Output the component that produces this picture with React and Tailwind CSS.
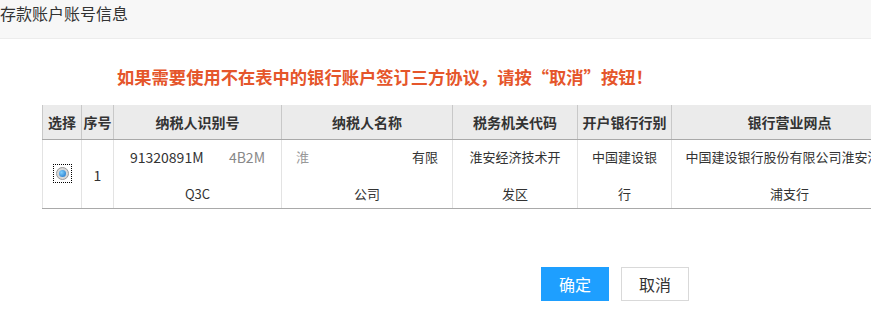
import React from "react";

const cols = "grid grid-cols-[39px_32px_168px_171px_125px_94px_236px]";

const headers = ["选择", "序号", "纳税人识别号", "纳税人名称", "税务机关代码", "开户银行行别", "银行营业网点"];

function Radio() {
  return (
    <span className="inline-flex items-center justify-center w-[19px] h-[19px] border border-dotted border-black">
      <span className="flex items-center justify-center w-[13px] h-[13px] rounded-full bg-[#d8d8d8] border border-[#9a9a9a]">
        <span className="w-[7px] h-[7px] rounded-full bg-[radial-gradient(circle_at_35%_35%,#7fd0ff,#1a6fc4)]" />
      </span>
    </span>
  );
}

function TwoLine({ first, second }) {
  return (
    <div className="flex flex-col h-[68px] pt-[3px] px-3 text-center">
      <div className="leading-[28px] h-[28px] whitespace-nowrap overflow-hidden">{first}</div>
      <div className="leading-[28px] h-[28px] mt-[9px] whitespace-nowrap overflow-hidden">{second}</div>
    </div>
  );
}

export default function App() {
  return (
    <div className="w-[871px] h-[310px] overflow-hidden bg-white text-[#333] font-['Noto_Sans_CJK_SC','Noto_Sans',sans-serif]">
      <div className="h-[39px] bg-[#f7f7f7] border-b border-[#ececec]">
        <div className="text-[16px] leading-[26px]">存款账户账号信息</div>
      </div>

      <div className="pl-[117px] mt-[26px] text-[17.3px] leading-[24px] font-bold text-[#e5562b] whitespace-nowrap">
        如果需要使用不在表中的银行账户签订三方协议，请按“取消”按钮！
      </div>

      <div className="ml-[42px] mt-[16px] w-[900px] text-[13px]">
        <div className={`${cols} h-[35px] bg-[#ebebeb] border-b border-[#a9a9a9]`}>
          {headers.map((h) => (
            <div key={h} className="flex items-center justify-center border-l border-[#c8c8c8] text-[14px] font-bold whitespace-nowrap">
              {h}
            </div>
          ))}
        </div>
        <div className={`${cols} h-[69px] border-b border-[#a9a9a9]`}>
          <div className="flex items-center justify-center border-l border-[#e3e3e3] pb-[2px]">
            <Radio />
          </div>
          <div className="flex items-center justify-center border-l border-[#e3e3e3] text-[14px] pt-[2px]">1</div>
          <div className="border-l border-[#e3e3e3]">
            <TwoLine
              first={
                <span className="inline-flex justify-between w-[135px] text-[14px]">
                  <span>91320891M</span>
                  <span className="text-[#888]">4B2M</span>
                </span>
              }
              second="Q3C"
            />
          </div>
          <div className="border-l border-[#e3e3e3]">
            <TwoLine
              first={
                <span className="inline-flex justify-between w-[142px]">
                  <span className="text-[#999]">淮</span>
                  <span>有限</span>
                </span>
              }
              second="公司"
            />
          </div>
          <div className="border-l border-[#e3e3e3]">
            <TwoLine first="淮安经济技术开" second="发区" />
          </div>
          <div className="border-l border-[#e3e3e3]">
            <TwoLine first="中国建设银" second="行" />
          </div>
          <div className="border-l border-[#e3e3e3]">
            <TwoLine first="中国建设银行股份有限公司淮安清江" second="浦支行" />
          </div>
        </div>
      </div>

      <div className="flex gap-3 pl-[541px] mt-[58px]">
        <button className="w-[68px] h-[34px] bg-[#1e9fff] text-white text-[16px]">确定</button>
        <button className="w-[68px] h-[34px] bg-white border border-[#d9d9d9] text-[#333] text-[16px]">取消</button>
      </div>
    </div>
  );
}
